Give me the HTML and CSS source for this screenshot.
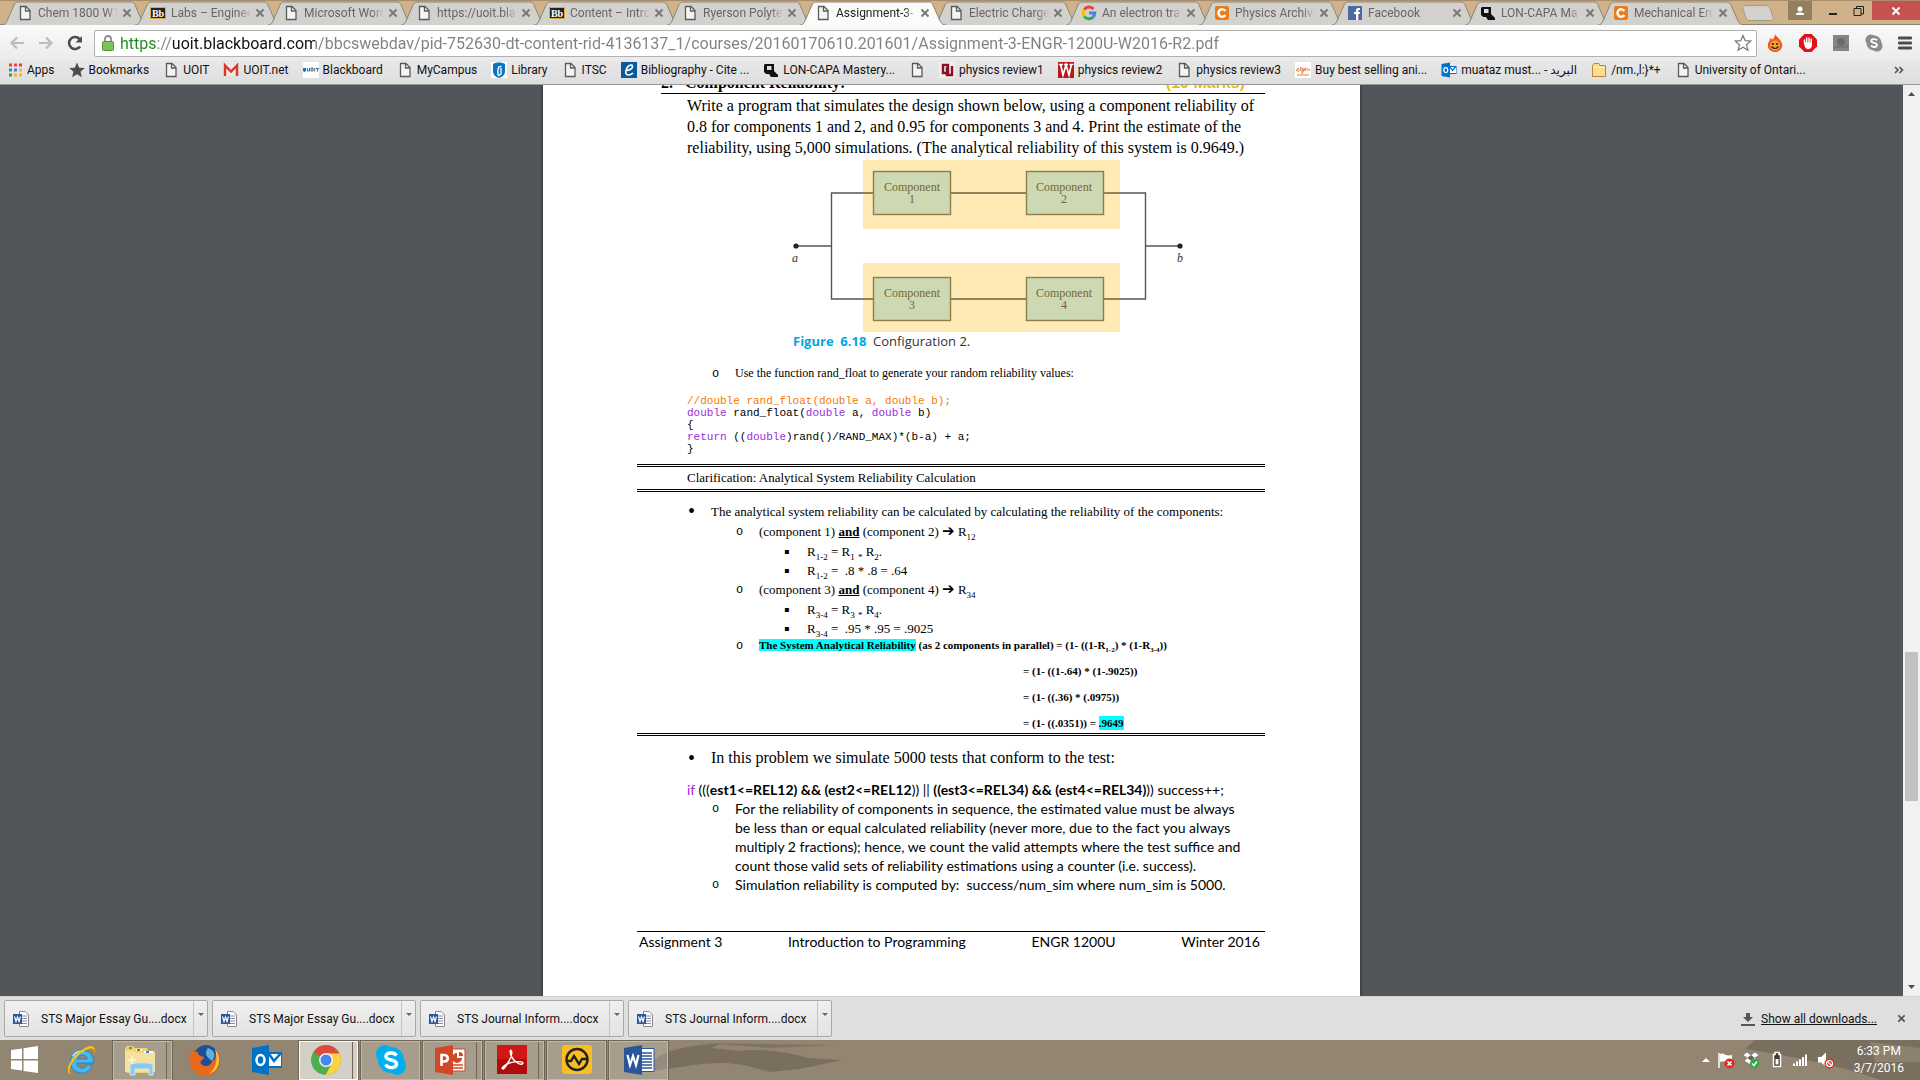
FILE: index.html
```
<!DOCTYPE html>
<html lang="en">
<head>
    <meta charset="UTF-8">
    <title>Assignment-3-ENGR-1200U-W2016-R2.pdf</title>
    <meta name="viewport" content="width=device-width, initial-scale=1.0">
    <link rel="stylesheet" href="styles.css">
</head>
<body>
    <svg class="defs" aria-hidden="true">
        <symbol id="tab-shape" viewBox="0 0 146 24">
            <path d="M0 24C3 24 4 22 5 20L12 4C13 2 14 1 16 1H129C131 1 132 2 133 4L140 20C141 22 143 24 146 24" stroke="#8d8674"/>
        </symbol>
        <symbol id="i-page" viewBox="0 0 16 16">
            <path d="M3.5 1.5H9L13 5.5V14.5H3.5Z" fill="#f4f4f4" stroke="#5a5a5a" stroke-width="1.3"/>
            <path d="M8.5 1.5V6H13" fill="none" stroke="#5a5a5a" stroke-width="1.3"/>
        </symbol>
        <symbol id="i-bb" viewBox="0 0 16 16">
            <rect x=".5" y="2.5" width="15" height="11" fill="#222" stroke="#e0a93b"/>
            <text x="8" y="11.5" text-anchor="middle" font-family="Liberation Serif" font-size="10" font-weight="bold" fill="#fff">Bb</text>
        </symbol>
        <symbol id="i-google" viewBox="0 0 16 16">
            <g fill="none" stroke-width="3">
                <path d="M3.2 4.7A5.8 5.8 0 0 1 12.5 4" stroke="#ea4335"/>
                <path d="M3.2 11.3A5.8 5.8 0 0 1 3.2 4.7" stroke="#fbbc05"/>
                <path d="M12 12.2A5.8 5.8 0 0 1 3.2 11.3" stroke="#34a853"/>
                <path d="M8 8H13.8A5.8 5.8 0 0 1 12 12.2" stroke="#4285f4"/>
            </g>
        </symbol>
        <symbol id="i-chegg" viewBox="0 0 16 16">
            <rect x="1" y="1" width="14" height="14" rx="2" fill="#eb7c1d"/>
            <path d="M11.3 6A3.7 3.7 0 1 0 11.3 10" fill="none" stroke="#fff" stroke-width="2.4"/>
        </symbol>
        <symbol id="i-fb" viewBox="0 0 16 16">
            <rect x="1" y="1" width="14" height="14" fill="#4e69a2"/>
            <path d="M9 15V9H7V7H9V5.5C9 3.5 10 3 13 3V5C11.5 5 11.3 5.2 11.3 6V7H13L12.7 9H11.3V15Z" fill="#fff"/>
        </symbol>
        <symbol id="i-lon" viewBox="0 0 16 16">
            <path d="M2 2H11V9L15 13V15H8L6 12H3L1 10V3Z" fill="#111"/>
            <path d="M4 4H8.5V8H4Z" fill="#ddd"/>
            <path d="M1 12L6 13" stroke="#ddd"/>
        </symbol>
        <symbol id="i-outlook" viewBox="0 0 32 32">
            <path d="M17 8H31V24H17Z" fill="#0072c6"/>
            <path d="M18 10H30V22H18Z" fill="#fff"/>
            <path d="M18 10L23 17L30 9" fill="none" stroke="#0072c6" stroke-width="2.5"/>
            <path d="M1 4L18 1V31L1 28Z" fill="#0072c6"/>
            <ellipse cx="9.5" cy="16" rx="4" ry="5" fill="none" stroke="#fff" stroke-width="2.5"/>
        </symbol>
        <symbol id="i-word" viewBox="0 0 32 32">
            <path d="M17 4.5H31V27.5H17Z" fill="#fff" stroke="#2a5699"/>
            <path d="M18 9H29M18 12H29M18 15H29M18 18H29M18 21H29M18 24H29" stroke="#2a5699" stroke-width="1.3"/>
            <path d="M1 4L19 1V31L1 28Z" fill="#2a5699"/>
            <path d="M4.5 11L7 21L10 12L13 21L15.5 11" fill="none" stroke="#fff" stroke-width="2.2"/>
        </symbol>
        <symbol id="i-docx" viewBox="0 0 16 16">
            <path d="M6.5 .5H12L15.5 4V15.5H6.5Z" fill="#fff" stroke="#8a8a8a"/>
            <path d="M9 5H14M9 7.5H14M9 10H14M9 12.5H14" stroke="#7f8ea5"/>
            <path d="M0 3H9V13H0Z" fill="#2a5699"/>
            <path d="M1.5 5.5L3 10.5L4.5 6L6 10.5L7.5 5.5" fill="none" stroke="#fff" stroke-width="1.2"/>
        </symbol>
        <symbol id="i-x" viewBox="0 0 10 10">
            <path d="M1.5 1.5L8.5 8.5M8.5 1.5L1.5 8.5" stroke="currentColor" stroke-width="1.9"/>
        </symbol>
    </svg>

    <header class="tab-strip">
        <nav class="tabs">
            <div class="tab"><svg class="tab-bg"><use href="#tab-shape"/></svg><svg class="icon"><use href="#i-page"/></svg><span class="tab-title">Chem 1800 W1</span><button class="tab-close" aria-label="Close"><svg><use href="#i-x"/></svg></button></div>
            <div class="tab"><svg class="tab-bg"><use href="#tab-shape"/></svg><svg class="icon"><use href="#i-bb"/></svg><span class="tab-title">Labs – Enginee</span><button class="tab-close" aria-label="Close"><svg><use href="#i-x"/></svg></button></div>
            <div class="tab"><svg class="tab-bg"><use href="#tab-shape"/></svg><svg class="icon"><use href="#i-page"/></svg><span class="tab-title">Microsoft Word</span><button class="tab-close" aria-label="Close"><svg><use href="#i-x"/></svg></button></div>
            <div class="tab"><svg class="tab-bg"><use href="#tab-shape"/></svg><svg class="icon"><use href="#i-page"/></svg><span class="tab-title">https://uoit.bla</span><button class="tab-close" aria-label="Close"><svg><use href="#i-x"/></svg></button></div>
            <div class="tab"><svg class="tab-bg"><use href="#tab-shape"/></svg><svg class="icon"><use href="#i-bb"/></svg><span class="tab-title">Content – Intro</span><button class="tab-close" aria-label="Close"><svg><use href="#i-x"/></svg></button></div>
            <div class="tab"><svg class="tab-bg"><use href="#tab-shape"/></svg><svg class="icon"><use href="#i-page"/></svg><span class="tab-title">Ryerson Polyte</span><button class="tab-close" aria-label="Close"><svg><use href="#i-x"/></svg></button></div>
            <div class="tab active"><svg class="tab-bg"><use href="#tab-shape"/></svg><svg class="icon"><use href="#i-page"/></svg><span class="tab-title">Assignment-3-</span><button class="tab-close" aria-label="Close"><svg><use href="#i-x"/></svg></button></div>
            <div class="tab"><svg class="tab-bg"><use href="#tab-shape"/></svg><svg class="icon"><use href="#i-page"/></svg><span class="tab-title">Electric Charge</span><button class="tab-close" aria-label="Close"><svg><use href="#i-x"/></svg></button></div>
            <div class="tab"><svg class="tab-bg"><use href="#tab-shape"/></svg><svg class="icon"><use href="#i-google"/></svg><span class="tab-title">An electron tra</span><button class="tab-close" aria-label="Close"><svg><use href="#i-x"/></svg></button></div>
            <div class="tab"><svg class="tab-bg"><use href="#tab-shape"/></svg><svg class="icon"><use href="#i-chegg"/></svg><span class="tab-title">Physics Archive</span><button class="tab-close" aria-label="Close"><svg><use href="#i-x"/></svg></button></div>
            <div class="tab"><svg class="tab-bg"><use href="#tab-shape"/></svg><svg class="icon"><use href="#i-fb"/></svg><span class="tab-title">Facebook</span><button class="tab-close" aria-label="Close"><svg><use href="#i-x"/></svg></button></div>
            <div class="tab"><svg class="tab-bg"><use href="#tab-shape"/></svg><svg class="icon"><use href="#i-lon"/></svg><span class="tab-title">LON-CAPA Ma</span><button class="tab-close" aria-label="Close"><svg><use href="#i-x"/></svg></button></div>
            <div class="tab"><svg class="tab-bg"><use href="#tab-shape"/></svg><svg class="icon"><use href="#i-chegg"/></svg><span class="tab-title">Mechanical En</span><button class="tab-close" aria-label="Close"><svg><use href="#i-x"/></svg></button></div>
        </nav>
        <button class="new-tab" aria-label="New tab"><svg width="32" height="16" viewBox="0 0 32 16"><path d="M3 .5H24C26 .5 27 1 28 3L31 12C32 14 31 15.5 29 15.5H8C6 15.5 5 15 4 13L1 4C0 2 1 .5 3 .5Z" fill="#d3d1cd" stroke="#a39a88"/></svg></button>
        <div class="window-controls">
            <button class="win-user" aria-label="User"><svg width="10" height="10" viewBox="0 0 10 10"><circle cx="5" cy="3" r="2.5" fill="#fff"/><path d="M1 9V7.5C2 6 8 6 9 7.5V9Z" fill="#fff"/></svg></button>
            <button aria-label="Minimize"><svg width="10" height="10" viewBox="0 0 10 10"><path d="M1 8H9" stroke="#222" stroke-width="2"/></svg></button>
            <button aria-label="Restore"><svg width="12" height="10" viewBox="0 0 12 10"><path d="M1 2.5H8V9.5H1ZM3.5 2.5V.5H10.5V8H8" fill="none" stroke="#222"/></svg></button>
            <button class="win-close" aria-label="Close window"><svg width="10" height="10"><use href="#i-x"/></svg></button>
        </div>
    </header>

    <div class="toolbar">
        <button aria-label="Back"><svg width="16" height="16" viewBox="0 0 16 16"><path d="M8 2.5L2.5 8L8 13.5M2.5 8H15" fill="none" stroke="#bcbcbc" stroke-width="2.2"/></svg></button>
        <button aria-label="Forward"><svg width="16" height="16" viewBox="0 0 16 16"><path d="M8 2.5L13.5 8L8 13.5M13.5 8H1" fill="none" stroke="#bcbcbc" stroke-width="2.2"/></svg></button>
        <button aria-label="Reload"><svg width="16" height="16" viewBox="0 0 16 16"><path d="M13 11.5A6 6 0 1 1 12.5 4" fill="none" stroke="#4e4e4e" stroke-width="2.6"/><path d="M15 1V7.5H8.5Z" fill="#4e4e4e"/></svg></button>
        <div class="omnibox">
            <svg width="12" height="16" viewBox="0 0 12 16"><path d="M3 7V4A3 3 0 0 1 9 4V7" fill="none" stroke="#8c8c8c" stroke-width="1.8"/><rect x=".5" y="6.5" width="11" height="9" rx="1" fill="#7cc35a" stroke="#56953a"/></svg>
            <input class="url" type="text" aria-label="Address" value="https://uoit.blackboard.com/bbcswebdav/pid-752630-dt-content-rid-4136137_1/courses/20160170610.201601/Assignment-3-ENGR-1200U-W2016-R2.pdf">
            <svg width="18" height="18" viewBox="0 0 18 18"><path d="M9 1.5L11.2 6.7L16.8 7.1L12.5 10.8L13.9 16.3L9 13.3L4.1 16.3L5.5 10.8L1.2 7.1L6.8 6.7Z" fill="#fff" stroke="#777" stroke-width="1.2"/></svg>
        </div>
        <div class="extensions">
            <button aria-label="Hola"><svg width="18" height="18" viewBox="0 0 18 18"><path d="M9 0C10 3 15 5 16 10C17 15 13 18 9 18C5 18 1 15 2 10C2 8 4 7 4 4C6 5 6 6 7 5C8 4 9 2 9 0Z" fill="#ee5a1c"/><circle cx="9" cy="11.5" r="5" fill="#f9a32a"/><circle cx="7" cy="10" r="1.1" fill="#222"/><circle cx="11" cy="10" r="1.1" fill="#222"/><path d="M5.5 12.5Q9 16.5 12.5 12.5" fill="none" stroke="#222" stroke-width="1.2"/></svg></button>
            <button aria-label="AdBlock"><svg width="18" height="18" viewBox="0 0 18 18"><path d="M5.5 0H12.5L18 5.5V12.5L12.5 18H5.5L0 12.5V5.5Z" fill="#e2121d"/><path d="M5.5 9V6M7.7 9V4M10 9V4M12.2 9V5" stroke="#fff" stroke-width="1.5" stroke-linecap="round"/><path d="M4.8 8.5H13V11C13 13 12 15 9 15C6 15 5.5 12 4.8 8.5Z" fill="#fff"/></svg></button>
            <button aria-label="Image viewer"><svg width="18" height="18" viewBox="0 0 18 18"><rect x="1" y="1" width="16" height="16" fill="#858585"/><circle cx="9" cy="8" r="4" fill="#6c6c6c"/><path d="M2 13C6 10 10 14 16 11V14H2Z" fill="#777"/></svg></button>
            <button aria-label="Skype"><svg width="18" height="18" viewBox="0 0 18 18"><circle cx="6" cy="6" r="5.5" fill="#8b8b8b"/><circle cx="12" cy="12" r="5.5" fill="#8b8b8b"/><circle cx="9" cy="9" r="7.5" fill="#8b8b8b"/><path d="M12 6.3C10.5 4.5 6.3 4.8 6.3 7C6.3 9.5 11.9 8.2 11.9 11C11.9 13.5 7.5 13.6 6 11.5" fill="none" stroke="#fff" stroke-width="1.9"/></svg></button>
            <button aria-label="Menu"><svg width="14" height="14" viewBox="0 0 14 14"><path d="M1 2H13M1 7H13M1 12H13" stroke="#4e4e4e" stroke-width="2.8" stroke-linecap="round"/></svg></button>
        </div>
    </div>

    <nav class="bookmarks">
        <a href="#"><svg class="icon" viewBox="0 0 16 16"><path d="M2 1.5H5V4.5H2Z" fill="#e8403a"/><path d="M7 1.5H10V4.5H7ZM12 1.5H15V4.5H12Z" fill="#e8403a"/><path d="M2 6.5H5V9.5H2Z" fill="#2ca15a"/><path d="M7 6.5H10V9.5H7Z" fill="#3d7ff0"/><path d="M12 6.5H15V9.5H12Z" fill="#f8b416"/><path d="M2 11.5H5V14.5H2Z" fill="#2ca15a"/><path d="M7 11.5H10V14.5H7ZM12 11.5H15V14.5H12Z" fill="#f8b416"/></svg>Apps</a>
        <a href="#"><svg class="icon" viewBox="0 0 16 16"><path d="M8 .5L10.2 5.7L15.8 6.1L11.5 9.8L12.9 15.3L8 12.3L3.1 15.3L4.5 9.8L.2 6.1L5.8 5.7Z" fill="#4c4c4c"/></svg>Bookmarks</a>
        <a href="#"><svg class="icon"><use href="#i-page"/></svg>UOIT</a>
        <a href="#"><svg class="icon" viewBox="0 0 16 16"><path d="M1 3H15V14H1Z" fill="#f1e9e8"/><path d="M2 14V3.5L8 9.5L14 3.5V14" fill="none" stroke="#d8372b" stroke-width="2.4"/></svg>UOIT.net</a>
        <a href="#"><svg class="icon" viewBox="0 0 16 16"><path d="M0 0H16V16H0Z" fill="#fff"/><path d="M0 6H3V9L1.5 10L0 9Z" fill="#0077c8"/><path d="M4.5 6V9H6.5V6M8 6H10V9H8ZM11.7 6V9.5M13 6.5H16M14.5 6.5V9.5" fill="none" stroke="#466884"/></svg>Blackboard</a>
        <a href="#"><svg class="icon"><use href="#i-page"/></svg>MyCampus</a>
        <a href="#"><svg class="icon" viewBox="0 0 16 16"><path d="M0 0H16V16H0Z" fill="#fff"/><path d="M2 2C5 0 11 0 14 2V9C14 13 11 15 8 16C5 15 2 13 2 9Z" fill="#0874c3"/><path d="M10.5 4.5C7 4 6.5 7 7 13M10 6V12L7 14" fill="none" stroke="#fff" stroke-width="1.4"/></svg>Library</a>
        <a href="#"><svg class="icon"><use href="#i-page"/></svg>ITSC</a>
        <a href="#"><svg class="icon" viewBox="0 0 16 16"><path d="M0 0H16V16H0Z" fill="#075a9f"/><path d="M5 8.5C9 8.5 12 6 11.5 4C11 2 7 3 5.5 7C4 11 5 13 7.5 13C9.5 13 11 12 12 11" fill="none" stroke="#fff" stroke-width="1.7"/></svg>Bibliography - Cite ...</a>
        <a href="#"><svg class="icon"><use href="#i-lon"/></svg>LON-CAPA Mastery...</a>
        <a href="#" aria-label="Untitled"><svg class="icon"><use href="#i-page"/></svg></a>
        <a href="#"><svg class="icon" viewBox="0 0 16 16"><path d="M0 0H16V16H0Z" fill="#f3eeee"/><path d="M4 3H9V11H4ZM8 5V13H13V4" fill="none" stroke="#8b0f22" stroke-width="2.4"/></svg>physics review1</a>
        <a href="#"><svg class="icon" viewBox="0 0 16 16"><path d="M0 0H16V16H0Z" fill="#b7191f"/><path d="M2.5 2L5 13L8 3L11 13L13.5 2M.8 2.5H5M6 2.5H10M11.5 2.5H15.5" fill="none" stroke="#fff" stroke-width="1.7"/></svg>physics review2</a>
        <a href="#"><svg class="icon"><use href="#i-page"/></svg>physics review3</a>
        <a href="#"><svg class="icon" viewBox="0 0 16 16"><path d="M0 0H16V16H0Z" fill="#fff"/><path d="M1 9C5 7 3 4 2 8C2 10 5 10 6 5C5 11 7 10 8 6C9 13 5 13 8 9C11 7 10 3 10 9C12 7 12 5 13 8C14 9 12 10 15 7M2 13H14" fill="none" stroke="#ee7b35"/></svg>Buy best selling ani...</a>
        <a href="#"><svg class="icon"><use href="#i-outlook"/></svg>muataz must... - البريد</a>
        <a href="#"><svg class="icon" viewBox="0 0 16 16"><path d="M1.5 3.5L3 1.5H8L9 3.5H14.5V14.5H1.5Z" fill="#fbdc92" stroke="#bd8537"/><path d="M2 5.5H14" stroke="#fff0c7"/></svg>/nm.,l:}*+</a>
        <a href="#"><svg class="icon"><use href="#i-page"/></svg>University of Ontari...</a>
        <button class="overflow" aria-label="More bookmarks"><svg width="10" height="8" viewBox="0 0 10 8"><path d="M1 1L4 4L1 7M5.5 1L8.5 4L5.5 7" fill="none" stroke="#555" stroke-width="1.7"/></svg></button>
    </nav>

    <div class="viewer">
        <main class="canvas">
            <article class="page">
                <h2 class="question"><span>2.</span><span>Component Reliability:</span><span class="marks">(10 Marks)</span></h2>
                <p class="intro">Write a program that simulates the design shown below, using a component reliability of<br>0.8 for components 1 and 2, and 0.95 for components 3 and 4. Print the estimate of the<br>reliability, using 5,000 simulations. (The analytical reliability of this system is 0.9649.)</p>
                <figure class="diagram">
                    <svg width="400" height="173" viewBox="0 0 400 173">
                        <g fill="#ffe9b5">
                            <rect x="73" y="1" width="257" height="69"/>
                            <rect x="73" y="104" width="257" height="69"/>
                        </g>
                        <g fill="none" stroke="#555" stroke-width="1.4">
                            <path d="M73 34H41.5V140H73M330 34H355.5V140H330M6 87H41.5M355.5 87H390"/>
                            <path d="M73 34H330M73 140H330" stroke="#93835a" stroke-width="1.8"/>
                        </g>
                        <circle cx="6" cy="87" r="2.6" fill="#222"/>
                        <circle cx="390" cy="87" r="2.6" fill="#222"/>
                        <g fill="#ccd9b2" stroke="#8b7f4d" stroke-width="1.4">
                            <rect x="83.5" y="12.5" width="77" height="43"/>
                            <rect x="236.5" y="12.5" width="77" height="43"/>
                            <rect x="83.5" y="118.5" width="77" height="43"/>
                            <rect x="236.5" y="118.5" width="77" height="43"/>
                        </g>
                        <g class="component-label">
                            <text x="122" y="32">Component</text><text x="122" y="44">1</text>
                            <text x="274" y="32">Component</text><text x="274" y="44">2</text>
                            <text x="122" y="138">Component</text><text x="122" y="150">3</text>
                            <text x="274" y="138">Component</text><text x="274" y="150">4</text>
                        </g>
                        <g class="node-label"><text x="5" y="103">a</text><text x="390" y="103">b</text></g>
                    </svg>
                    <figcaption><b>Figure&nbsp; 6.18</b>&nbsp; Configuration 2.</figcaption>
                </figure>
                <ul class="circle hint"><li>Use the function rand_float to generate your random reliability values:</li></ul>
                <pre class="code"><span class="comment">//double rand_float(double a, double b);</span>
<span class="kw">double</span> rand_float(<span class="kw">double</span> a, <span class="kw">double</span> b)
{
<span class="kw">return</span> ((<span class="kw">double</span>)rand()/RAND_MAX)*(b-a) + a;
}</pre>
                <h3 class="clarification">Clarification: Analytical System Reliability Calculation</h3>
                <section class="analysis">
                    <ul class="disc">
                        <li>The analytical system reliability can be calculated by calculating the reliability of the components:
                            <ul class="circle">
                                <li>(component 1) <b><u>and</u></b> (component 2) <span class="arrow">➔</span> R<sub>12</sub>
                                    <ul class="square">
                                        <li>R<sub>1-2</sub> = R<sub>1</sub> <sub>*</sub> R<sub>2</sub>.</li>
                                        <li>R<sub>1-2</sub> = &nbsp;.8 * .8 = .64</li>
                                    </ul>
                                </li>
                                <li>(component 3) <b><u>and</u></b> (component 4) <span class="arrow">➔</span> R<sub>34</sub>
                                    <ul class="square">
                                        <li>R<sub>3-4</sub> = R<sub>3</sub> <sub>*</sub> R<sub>4</sub>.</li>
                                        <li>R<sub>3-4</sub> = &nbsp;.95 * .95 = .9025</li>
                                    </ul>
                                </li>
                                <li class="result"><mark>The System Analytical Reliability</mark> (as 2 components in parallel) = (1- ((1-R<sub>1-2</sub>) * (1-R<sub>3-4</sub>))
                                    <div class="steps">
                                        <p>= (1- ((1-.64) * (1-.9025))</p>
                                        <p>= (1- ((.36) * (.0975))</p>
                                        <p>= (1- ((.0351)) = <mark>.9649</mark></p>
                                    </div>
                                </li>
                            </ul>
                        </li>
                    </ul>
                </section>
                <ul class="disc test"><li>In this problem we simulate 5000 tests that conform to the test:</li></ul>
                <p class="condition"><span class="kw">if</span> (((<b>est1&lt;=REL12) &amp;&amp; (est2&lt;=REL12</b>)) || <b>((est3&lt;=REL34) &amp;&amp; (est4&lt;=REL34)</b>)) success++;</p>
                <ul class="circle notes">
                    <li>For the reliability of components in sequence, the estimated value must be always<br>be less than or equal calculated reliability (never more, due to the fact you always<br>multiply 2 fractions); hence, we count the valid attempts where the test suffice and<br>count those valid sets of reliability estimations using a counter (i.e. success).</li>
                    <li>Simulation reliability is computed by: &nbsp;success/num_sim where num_sim is 5000.</li>
                </ul>
                <footer class="page-footer"><span>Assignment 3</span><span>Introduction to Programming</span><span>ENGR 1200U</span><span>Winter 2016</span></footer>
            </article>
        </main>
        <div class="scrollbar">
            <svg width="7" height="4" viewBox="0 0 7 4"><path d="M0 4L3.5 0L7 4Z" fill="#505050"/></svg>
            <div class="track"><div class="thumb"></div></div>
            <svg width="7" height="4" viewBox="0 0 7 4"><path d="M0 0L3.5 4L7 0Z" fill="#505050"/></svg>
        </div>
    </div>

    <div class="downloads">
        <div class="download"><button class="file"><svg class="icon"><use href="#i-docx"/></svg>STS Major Essay Gu....docx</button><button class="drop" aria-label="Options"></button></div>
        <div class="download"><button class="file"><svg class="icon"><use href="#i-docx"/></svg>STS Major Essay Gu....docx</button><button class="drop" aria-label="Options"></button></div>
        <div class="download"><button class="file"><svg class="icon"><use href="#i-docx"/></svg>STS Journal Inform....docx</button><button class="drop" aria-label="Options"></button></div>
        <div class="download"><button class="file"><svg class="icon"><use href="#i-docx"/></svg>STS Journal Inform....docx</button><button class="drop" aria-label="Options"></button></div>
        <a class="show-all" href="#"><svg width="14" height="14" viewBox="0 0 14 14"><path d="M5 1H9V5H12L7 10L2 5H5ZM0 12H14V14H0Z" fill="#555"/></svg><span>Show all downloads...</span></a>
        <button class="close-bar" aria-label="Close downloads"><svg width="9" height="9"><use href="#i-x"/></svg></button>
    </div>

    <footer class="taskbar">
        <svg class="wallpaper" viewBox="0 0 1920 40" preserveAspectRatio="none" aria-hidden="true">
            <path d="M650 26C655 12 690 4 720 4L712 8L738 11C760 8 790 12 808 18L842 20L800 29L770 32L755 28C720 18 700 25 650 31Z" fill="#7a6f5f"/>
            <path d="M700 3L835 5L770 8Z" fill="#7f7463"/>
            <path d="M1755 0H1920V40H1880C1840 25 1790 16 1745 9Z" fill="#7a6e5f"/>
            <path d="M1870 2L1920 8V22H1875Z" fill="#8c806f"/>
        </svg>
        <button class="start" aria-label="Start"><svg width="28" height="28" viewBox="0 0 28 28"><path d="M1 4L12 2.5V13H1ZM13.5 2.3L28 0V13H13.5ZM1 14.5H12V24.5L1 23ZM13.5 14.5H28V27L13.5 25Z" fill="#fff"/></svg></button>
        <button class="app" aria-label="Internet Explorer"><svg viewBox="0 0 32 32"><path d="M27.5 21C25.5 26.5 21.5 29 17 29C10 29 5.5 24 5.5 17.5C5.5 11 10 6 17 6C24 6 29 11 28.5 19H12C12 25 20 26 21.5 21ZM12 15H22.5C22 10 12.5 10 12 15Z" fill="#45b8ee" stroke="#1d7fc0" stroke-width=".8"/><path d="M8 12C10 8 15 7 19 7.5" fill="none" stroke="#b5e8fb" stroke-width="1.8"/><path d="M6 30C-1 29 5 15 13 9C22 1 32-1 29.5 9C30 2 22 4 15 10C7 17 2 26 6 30Z" fill="#f9cc2c" stroke="#d79e15" stroke-width=".6"/></svg></button>
        <button class="app open multi" aria-label="File Explorer"><svg viewBox="0 0 32 32"><path d="M1 4L3 2H9L11 4H23L24 7H31V26L28 29H3L1 26Z" fill="#eed37d"/><path d="M5 3H8V5H5Z" fill="#37a94a"/><path d="M12 5H18V7H12Z" fill="#fff"/><path d="M13 5H16V7H13Z" fill="#e34a32"/><path d="M20 7H29V9H20Z" fill="#fff"/><path d="M22 7H25V9H22Z" fill="#2c8bd8"/><path d="M1 7H11L13 9H31V28H1Z" fill="#f6e29b"/><path d="M6 21C6 18 29 18 29 21V31H25V25H11V31H6Z" fill="#8cc9e8" stroke="#c7ebf8"/><path d="M8 12V20M4 16H12" stroke="#fff"/></svg></button>
        <button class="app" aria-label="Firefox"><svg viewBox="0 0 32 32"><circle cx="16" cy="17" r="15" fill="#e2601b"/><circle cx="17" cy="13" r="12" fill="#1f4f94"/><path d="M19 4C26 6 27 12 23 17C19 14 14 10 19 4Z" fill="#63aedb"/><path d="M2 7C4 10 6 7 9 8C8 11 12 12 15 13C15 16 10 16 12 20C16 24 22 22 24 16C26 17 28 12 26 5C34 14 30 31 17 32C3 32-1 19 2 7Z" fill="#e8691b"/><path d="M26 5C33 14 31 26 20 30C28 23 29 14 26 5Z" fill="#fcc534"/></svg></button>
        <button class="app" aria-label="Outlook"><svg><use href="#i-outlook"/></svg></button>
        <button class="app open focus" aria-label="Chrome"><svg viewBox="0 0 32 32"><circle cx="16" cy="16" r="15" fill="#4eae50"/><path d="M16 16L3.5 8A15 15 0 0 1 29.5 9.5H16Z" fill="#dd4b3e"/><path d="M16 9.5H29.5A15 15 0 0 1 15.5 31L22 19Z" fill="#fdd23e"/><circle cx="16" cy="16" r="7" fill="#f3f3f3"/><circle cx="16" cy="16" r="5.5" fill="#4688ed"/></svg></button>
        <button class="app open" aria-label="Skype"><svg viewBox="0 0 32 32"><circle cx="10" cy="10" r="9" fill="#00aff0"/><circle cx="22" cy="22" r="9" fill="#00aff0"/><circle cx="16" cy="16" r="13" fill="#00aff0"/><path d="M21.5 11.5C19 7.5 11 8.5 11 12.5C11 17.5 21.5 14.5 21.5 20C21.5 24.5 13 25 10.5 20.5" fill="none" stroke="#fff" stroke-width="3.4"/></svg></button>
        <button class="app open multi" aria-label="PowerPoint"><svg viewBox="0 0 32 32"><path d="M17 5H31V27H17Z" fill="#fff" stroke="#d24726"/><path d="M19 21H29M19 24H29" stroke="#d24726" stroke-width="1.5"/><path d="M23 9A5 5 0 1 0 28 14H23Z" fill="#d24726"/><path d="M25 8A4 4 0 0 1 29 12H25Z" fill="#d24726"/><path d="M1 4L19 1V31L1 28Z" fill="#d24726"/><path d="M7.5 22V11H10C15 11 15 17.5 10 17.5H8" fill="none" stroke="#fff" stroke-width="2.6"/></svg></button>
        <button class="app open multi" aria-label="Adobe Reader"><svg viewBox="0 0 32 32"><rect x="1" y="1" width="30" height="29" fill="#b30b0b"/><rect x="1" y="1" width="30" height="14" fill="#cf1815"/><path d="M6 25C12 21 17 11 15.5 7C14 4 13 10 17 15C20 19 26 22 27 19C27 17 18 17 11 20C7 22 5 25 7 25C8 25 10 22 12 19" fill="none" stroke="#fff" stroke-width="1.4"/></svg></button>
        <button class="app open" aria-label="Norton"><svg viewBox="0 0 32 32"><rect x="1" y="1" width="30" height="29" rx="3" fill="#f9bf22"/><circle cx="16" cy="15.5" r="10.5" fill="none" stroke="#222" stroke-width="2.4"/><path d="M5 17H10L13 12L18 20L21 15H27" fill="none" stroke="#222" stroke-width="2.4"/></svg></button>
        <button class="app open" aria-label="Word"><svg><use href="#i-word"/></svg></button>
        <div class="tray">
            <svg width="8" height="6" viewBox="0 0 8 6"><path d="M0 5L4 1L8 5Z" fill="#fff"/></svg>
            <svg width="18" height="18" viewBox="0 0 18 18"><path d="M2 17V2" stroke="#fff" stroke-width="1.5"/><path d="M3 3C7 1 8 6 15 4V11C9 12 8 9 3 11Z" fill="#fff"/><circle cx="12.5" cy="12.5" r="5" fill="#df2b25"/><path d="M10.5 10.5L14.5 14.5M14.5 10.5L10.5 14.5" stroke="#fff" stroke-width="1.5"/></svg>
            <svg width="18" height="18" viewBox="0 0 18 18"><path d="M5 1L9 4L13 1L17 4L13 7L16 10L9 14L2 10L5 7L1 4Z" fill="#fff" stroke="#555" stroke-width=".5"/><path d="M9 4L13 7L9 9.5L5 7Z" fill="#6d6557"/><circle cx="12.5" cy="12.5" r="4.5" fill="#28a745"/><path d="M10 12.5L12 14.5L15 10.5" fill="none" stroke="#fff" stroke-width="1.5"/></svg>
            <svg width="18" height="18" viewBox="0 0 18 18"><path d="M6.5 3.5H8V1.5H12V3.5H13.5V15.5H6.5Z" fill="#3c3832" stroke="#fff" stroke-width="1.5"/><path d="M8.5 8H11.5V13.5H8.5Z" fill="#fff"/></svg>
            <svg width="18" height="18" viewBox="0 0 18 18"><path d="M1 12.5H3V15H1ZM4 10.5H6V15H4ZM7 8.5H9V15H7ZM10 6H12V15H10ZM13 3.5H15V15H13Z" fill="#fff"/></svg>
            <svg width="18" height="18" viewBox="0 0 18 18"><path d="M1 6H4L9 1.5V15.5L4 11.5H1Z" fill="#fff"/><circle cx="12.5" cy="12.5" r="5" fill="#df2b25"/><circle cx="12.5" cy="12.5" r="3" fill="none" stroke="#fff" stroke-width="1.2"/><path d="M10.5 10.5L14.5 14.5" stroke="#fff" stroke-width="1.2"/></svg>
            <div class="clock"><span>6:33 PM</span><span>3/7/2016</span></div>
        </div>
    </footer>
</body>
</html>
```
FILE: styles.css
```
* {
    box-sizing: border-box;
}

body {
    margin: 0;
    height: 100vh;
    display: flex;
    flex-direction: column;
    overflow: hidden;
    background: #52565a;
    color: #111;
    font-family: Roboto, "DejaVu Sans", sans-serif;
    font-size: 12px;
}

button {
    display: flex;
    align-items: center;
    justify-content: center;
    padding: 0;
    border: 0;
    background: transparent;
    color: inherit;
    font: inherit;
}

a {
    color: inherit;
    text-decoration: none;
}

ul, p, pre, figure {
    margin: 0;
    padding: 0;
}

svg {
    flex: none;
}

.defs {
    position: absolute;
    width: 0;
    height: 0;
}

.icon {
    width: 16px;
    height: 16px;
}

/* tabs */
.tab-strip {
    display: flex;
    height: 25px;
    padding-left: 2px;
    background: #cfb18a;
    border-top: 1px solid #a98e69;
    border-bottom: 1px solid #8d8674;
}

.tabs {
    display: flex;
    min-width: 0;
    padding-right: 11px;
}

.tab {
    position: relative;
    display: flex;
    align-items: center;
    flex: 0 1 auto;
    width: 146px;
    min-width: 0;
    height: 24px;
    margin-right: -13px;
    padding: 0 16px 0 15px;
    color: #666;
}

.tab-bg {
    position: absolute;
    left: 0;
    top: 0;
    width: 100%;
    height: 24px;
    fill: #d3d1ce;
}

.tab .icon {
    position: relative;
}

.tab-title {
    position: relative;
    flex: 1;
    margin-left: 5px;
    overflow: hidden;
    white-space: nowrap;
    -webkit-mask-image: linear-gradient(to right, #000 85%, transparent);
    mask-image: linear-gradient(to right, #000 85%, transparent);
}

.tab-close {
    position: relative;
    width: 10px;
    margin-left: 4px;
    color: #777;
}

.tab-close svg {
    width: 10px;
    height: 10px;
}

.tab.active {
    z-index: 1;
    color: #222;
}

.tab.active .tab-bg {
    fill: #fbfbfb;
}

.new-tab {
    align-self: flex-start;
    margin-top: 4px;
}

.window-controls {
    display: flex;
    height: 19px;
    margin-left: auto;
}

.window-controls button {
    width: 26px;
}

.window-controls .win-user {
    width: 24px;
    margin-right: 8px;
    background: #92815f;
}

.window-controls .win-close {
    width: 48px;
    background: #c75050;
    color: #fff;
}

/* address bar */
.toolbar {
    display: flex;
    align-items: center;
    height: 35px;
    padding: 1px 8px 0 9px;
    background: linear-gradient(#fafafa, #ebebeb);
}

.toolbar > button {
    width: 16px;
    margin-right: 13px;
}

.toolbar > button:nth-of-type(3) {
    margin-right: 11px;
}

.omnibox {
    display: flex;
    align-items: center;
    flex: 1;
    height: 27px;
    padding: 0 4px 0 7px;
    border: 1px solid #b0b0b0;
    border-radius: 2px;
    background: #fff;
}

.url {
    flex: 1;
    margin-left: 6px;
    padding: 0;
    border: 0;
    outline: 0;
    font: 16px Roboto, sans-serif;
    color: transparent;
    background: linear-gradient(to right, #1a8a1a 37px, #888 37px 53px, #111 53px 195px, #808080 195px);
    -webkit-background-clip: text;
    background-clip: text;
}

.extensions {
    display: flex;
    align-items: center;
    gap: 15px;
    padding-left: 9px;
}

/* bookmarks */
.bookmarks {
    display: flex;
    align-items: center;
    gap: 14px;
    height: 25px;
    padding: 0 16px 4px 7px;
    background: linear-gradient(#e8e8e8, #dedede);
    border-bottom: 1px solid #999;
    white-space: nowrap;
}

.bookmarks a {
    display: flex;
    align-items: center;
    gap: 4px;
}

.overflow {
    margin-left: auto;
}

/* pdf viewer */
.viewer {
    display: flex;
    flex: 1;
    min-height: 0;
}

.canvas {
    flex: 1;
    overflow: hidden;
}

.page {
    width: 817px;
    min-height: 960px;
    margin: -16px auto 0;
    padding: 0 95px 0 94px;
    background: #fff;
    box-shadow: 0 0 3px #222;
    color: #000;
    font-family: "Liberation Serif", serif;
}

.question {
    display: flex;
    gap: 12px;
    height: 25px;
    margin: 0 0 0 24px;
    padding-right: 20px;
    border-bottom: 1px solid #000;
    font-size: 16px;
    line-height: 28px;
}

.marks {
    margin-left: auto;
    color: #f5b800;
    font-family: "Liberation Sans", sans-serif;
}

.intro {
    margin-left: 50px;
    padding-top: 1px;
    font-size: 16px;
    line-height: 21px;
    white-space: nowrap;
}

.diagram {
    margin: 1px 0 0 153px;
}

.diagram svg {
    display: block;
}

.component-label {
    fill: #75673b;
    font-size: 12px;
    text-anchor: middle;
}

.node-label {
    fill: #333;
    font-size: 12px;
    font-style: italic;
    text-anchor: middle;
}

figcaption {
    margin-left: 3px;
    color: #333;
    font: 13px/18px "Open Sans", sans-serif;
}

figcaption b {
    color: #00a4e4;
}

.page ul {
    list-style: none;
}

.page li {
    position: relative;
    white-space: nowrap;
}

/* bullets hang in the margin left of the text */
.page li::before {
    position: absolute;
    left: -23px;
    font-weight: normal;
}

.disc > li::before {
    content: "•";
    font-size: 20px;
}

.circle > li::before {
    content: "o";
    top: 1px;
    font-family: "Liberation Mono", monospace;
    font-size: 12px;
}

.square > li::before {
    content: "▪";
    font-size: 16px;
}

.hint {
    margin: 14px 0 0 98px;
    font-size: 12px;
    line-height: 18px;
}

.code {
    margin: 13px 0 9px 50px;
    font: 11px/12px "Liberation Mono", monospace;
}

.comment {
    color: #f57900;
}

.kw {
    color: #9a2be0;
}

.clarification {
    margin: 0;
    padding-left: 50px;
    border-top: 3px double #000;
    border-bottom: 3px double #000;
    font-size: 13px;
    font-weight: normal;
    line-height: 22px;
}

.analysis {
    padding: 10px 0 0 74px;
    border-bottom: 3px double #000;
    font-size: 13px;
    line-height: 19px;
}

.analysis li ul {
    margin: 1px 0 0 48px;
}

sub {
    font-size: 9px;
    line-height: 0;
}

.arrow {
    font-family: "DejaVu Sans", sans-serif;
    font-size: 15px;
    font-weight: bold;
    line-height: 0;
}

.result {
    font-size: 11px;
    font-weight: bold;
    line-height: 15px;
}

.result sub {
    font-size: 7px;
}

mark {
    background: #0ff;
}

.steps {
    display: grid;
    gap: 6px;
    margin: 8px 0 0 264px;
    line-height: 20px;
}

.steps mark {
    padding: 1px 0;
}

.test {
    margin: 12px 0 0 74px;
    font-size: 16px;
    line-height: 20px;
}

.condition {
    margin: 12px 0 0 50px;
    font: 14px/19px Lato, sans-serif;
    white-space: nowrap;
}

.notes {
    margin-left: 98px;
    font: 14px/19px Lato, sans-serif;
}

.page-footer {
    display: flex;
    justify-content: space-between;
    margin-top: 37px;
    padding: 1px 5px 0 2px;
    border-top: 1px solid #000;
    font: 14px/18px Lato, sans-serif;
}

.scrollbar {
    display: flex;
    flex-direction: column;
    align-items: center;
    width: 17px;
    padding: 7px 0;
    background: #f1f1f1;
}

.track {
    flex: 1;
    align-self: stretch;
    margin: 6px 2px;
}

.thumb {
    height: 17%;
    margin-top: 550px;
    background: #c1c1c1;
}

/* downloads */
.downloads {
    display: flex;
    align-items: center;
    gap: 4px;
    height: 44px;
    padding: 0 14px 0 4px;
    background: #dfdfdf;
    border-top: 1px solid #d0d0d0;
}

.download {
    display: flex;
    width: 204px;
    height: 37px;
    border: 1px solid #a9a9a9;
    border-radius: 2px;
    background: linear-gradient(#f0f0f0, #e3e3e3);
}

.file {
    flex: 1;
    justify-content: flex-start;
    gap: 12px;
    padding-left: 8px;
    white-space: nowrap;
}

.drop {
    align-items: flex-start;
    width: 14px;
    padding-top: 12px;
    border-left: 1px solid #c4c4c4;
}

.drop::before {
    content: "";
    border: 3px solid transparent;
    border-top-color: #666;
}

.show-all {
    display: flex;
    align-items: center;
    gap: 6px;
    margin-left: auto;
    text-decoration: underline;
}

.close-bar {
    margin-left: 16px;
    color: #555;
}

/* taskbar */
.taskbar {
    position: relative;
    display: flex;
    align-items: center;
    gap: 3px;
    height: 40px;
    padding-right: 16px;
    background: #928571;
}

.wallpaper {
    position: absolute;
    width: 100%;
    height: 100%;
}

.taskbar button {
    position: relative;
}

.start {
    width: 48px;
}

.app {
    width: 59px;
    height: 39px;
    border: 1px solid transparent;
}

.app svg {
    width: 32px;
    height: 32px;
}

.app.open {
    background: rgba(255, 255, 255, 0.2);
    border-color: #c0b8a9;
    outline: 1px solid #6f6658;
    outline-offset: 0;
}

.app.multi {
    padding-right: 6px;
    box-shadow: inset -4px 0 #a59b8a, inset -5px 0 #6f6658;
}

.app.focus {
    background: #d5d0c7;
    border-color: #fff;
    box-shadow: inset -4px 0 #d5d0c7, inset -5px 0 #6f6658;
    padding-right: 6px;
}

.tray {
    position: relative;
    display: flex;
    align-items: center;
    gap: 7px;
    margin-left: auto;
    color: #fff;
}

.clock {
    display: flex;
    flex-direction: column;
    align-items: center;
    margin-left: 12px;
    line-height: 17px;
}
```
